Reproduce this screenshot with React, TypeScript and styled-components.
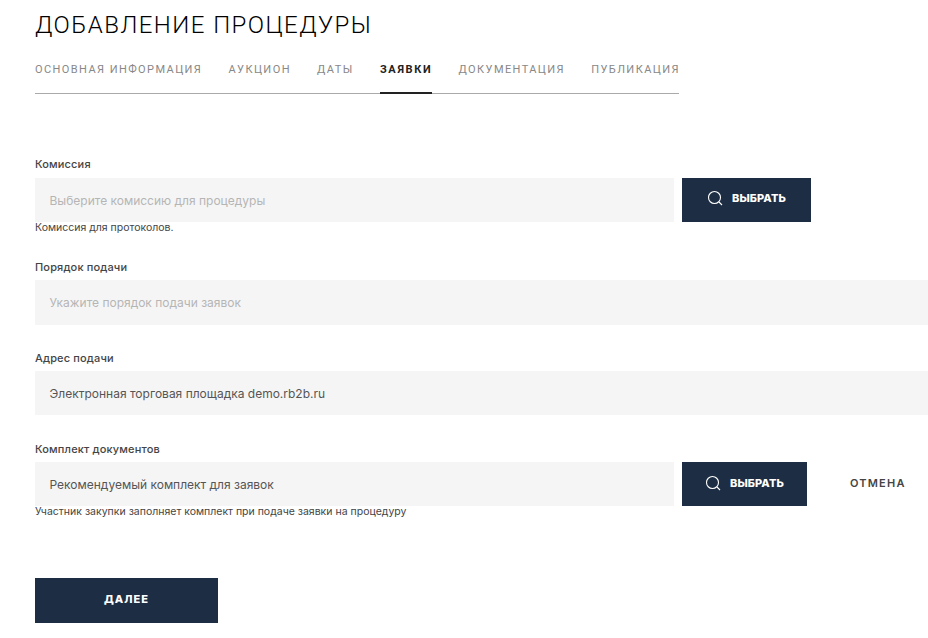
import * as React from 'react'
import styled, { createGlobalStyle } from 'styled-components'

const GlobalStyle = createGlobalStyle`
  html, body {
    margin: 0;
    padding: 0;
    background: #fff;
    overflow: hidden;
  }
`

const Page = styled.div`
  width: 928px;
  height: 638px;
  box-sizing: border-box;
  padding: 10px 0 0 35px;
  font-family: Inter, 'Noto Sans', sans-serif;
  color: #222;
  overflow: hidden;
`

const Title = styled.h1`
  margin: 0;
  font-family: Roboto, sans-serif;
  font-weight: 300;
  font-size: 24px;
  line-height: 30px;
  letter-spacing: 1.45px;
  color: #000;
  text-transform: uppercase;
`

const Tabs = styled.nav`
  display: flex;
  gap: 26.2px;
  width: 644px;
  height: 54px;
  box-sizing: border-box;
  border-bottom: 1px solid #aaa;
`

const Tab = styled.div<{ active?: boolean }>`
  height: 54px;
  box-sizing: border-box;
  padding-top: 22px;
  font-family: Roboto, sans-serif;
  font-size: 11px;
  line-height: 16px;
  letter-spacing: ${(props) => (props.active ? '1.65px' : '1.42px')};
  white-space: nowrap;
  text-transform: uppercase;
  font-weight: ${(props) => (props.active ? 700 : 400)};
  color: ${(props) => (props.active ? '#222' : '#888')};
  border-bottom: ${(props) => (props.active ? '2px solid #222' : 'none')};
`

const Form = styled.div`
  display: flex;
  flex-direction: column;
  padding-top: 63px;
`

const Field = styled.div<{ gap: number }>`
  margin-bottom: ${(props) => props.gap}px;
`

const Label = styled.div<{ tight?: boolean }>`
  font-size: 11px;
  font-weight: 500;
  line-height: 14px;
  height: 14px;
  margin-bottom: ${(props) => (props.tight ? 6 : 7)}px;
  letter-spacing: 0.15px;
  color: #444;
`

const Row = styled.div`
  display: flex;
  align-items: stretch;
`

const Input = styled.div<{ filled?: boolean; short?: boolean; h?: number }>`
  box-sizing: border-box;
  height: ${(props) => props.h ?? 44}px;
  width: ${(props) => (props.short ? '639px' : '893px')};
  flex: none;
  padding-left: 14.5px;
  display: flex;
  align-items: center;
  background: #f5f5f5;
  font-size: 12px;
  color: ${(props) => (props.filled ? '#555' : '#b5b5b5')};
`

const Hint = styled.div`
  font-size: 10.5px;
  line-height: 10px;
  margin-top: 1px;
  color: #444;
`

const PickButton = styled.button<{ w: number; lift: number }>`
  flex: none;
  width: ${(props) => props.w}px;
  margin-left: 8px;
  border: 0;
  padding: 0 0 ${(props) => props.lift}px;
  display: flex;
  align-items: center;
  justify-content: center;
  gap: 9px;
  background: #1d2e44;
  color: #fff;
  font-family: Inter, sans-serif;
  font-size: 11px;
  font-weight: 800;
  letter-spacing: 0.1px;
`

const CancelButton = styled.button`
  flex: none;
  margin-left: 43px;
  border: 0;
  padding: 0 0 2px;
  background: none;
  font-family: Inter, sans-serif;
  font-size: 11px;
  font-weight: 600;
  letter-spacing: 1.2px;
  color: #444;
`

const NextButton = styled.button`
  width: 183px;
  height: 45px;
  margin-top: 61px;
  border: 0;
  padding: 0 0 3px;
  background: #1d2e44;
  color: #fff;
  font-family: Inter, sans-serif;
  font-size: 11px;
  font-weight: 800;
  letter-spacing: 1px;
`

const SearchIcon = () => (
  <svg width="16" height="16" viewBox="0 0 16 16" fill="none" stroke="#fff" strokeWidth="1.1">
    <circle cx="7.5" cy="7.5" r="6" />
    <path d="M12 12l3 3" />
  </svg>
)

const tabs = ['Основная информация', 'Аукцион', 'Даты', 'Заявки', 'Документация', 'Публикация']

export default function App() {
  return (
    <Page>
      <GlobalStyle />
      <Title>Добавление процедуры</Title>
      <Tabs>
        {tabs.map((tab) => (
          <Tab key={tab} active={tab === 'Заявки'}>{tab}</Tab>
        ))}
      </Tabs>
      <Form>
        <Field gap={27}>
          <Label>Комиссия</Label>
          <Row>
            <Input short>Выберите комиссию для процедуры</Input>
            <PickButton w={129} lift={4}><SearchIcon />ВЫБРАТЬ</PickButton>
          </Row>
          <Hint>Комиссия для протоколов.</Hint>
        </Field>
        <Field gap={26}>
          <Label tight>Порядок подачи</Label>
          <Input h={45}>Укажите порядок подачи заявок</Input>
        </Field>
        <Field gap={27}>
          <Label tight>Адрес подачи</Label>
          <Input filled>Электронная торговая площадка demo.rb2b.ru</Input>
        </Field>
        <Field gap={0}>
          <Label tight>Комплект документов</Label>
          <Row>
            <Input short filled>Рекомендуемый комплект для заявок</Input>
            <PickButton w={125} lift={2}><SearchIcon />ВЫБРАТЬ</PickButton>
            <CancelButton>ОТМЕНА</CancelButton>
          </Row>
          <Hint>Участник закупки заполняет комплект при подаче заявки на процедуру</Hint>
        </Field>
        <NextButton>ДАЛЕЕ</NextButton>
      </Form>
    </Page>
  )
}
